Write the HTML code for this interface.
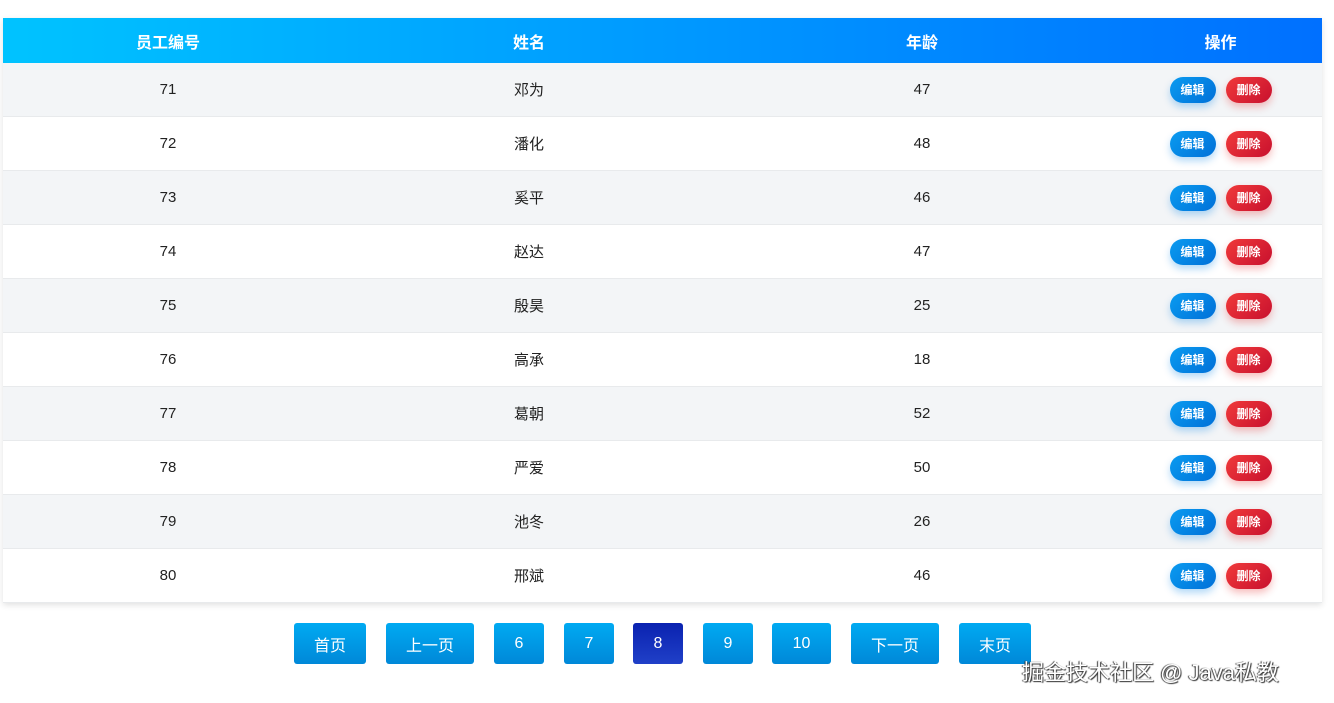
<!DOCTYPE html><html><head><meta charset="utf-8"><style>
body{margin:0;width:1334px;height:703px;background:#fff;font-family:"Liberation Sans","Noto Sans CJK SC",sans-serif;position:relative;overflow:hidden}
.tbl{position:absolute;left:3px;top:18px;width:1319px;box-shadow:0 2px 6px rgba(0,0,0,.12)}
.hd{height:45px;background:linear-gradient(90deg,#00c3ff,#0070ff);color:#fff;font-weight:bold;font-size:16px;display:flex}
.row{height:53px;border-bottom:1px solid #e8eaec;display:flex;font-size:15px;color:#222}
.row:nth-child(odd){background:#f3f5f7}
.c{display:flex;align-items:center;justify-content:center}
.c1{width:330px}.c2{width:392px}.c3{width:394px}.c4{width:203px}
.b{width:46px;height:26px;border-radius:13px;color:#fff;font-size:12px;font-weight:bold;display:flex;align-items:center;justify-content:center;margin:0 5px}
.e{background:linear-gradient(135deg,#0a9bf0,#0070d8);box-shadow:0 4px 8px rgba(0,130,230,.3)}
.d{background:linear-gradient(135deg,#f03a3a,#c8102e);box-shadow:0 4px 8px rgba(230,40,40,.3)}
.p{position:absolute;top:623px;height:41px;border-radius:3px;background:linear-gradient(#00aaf2,#0088d8);color:#fff;font-size:16px;display:flex;align-items:center;justify-content:center}
.wm{position:absolute;left:1022px;top:655px;font-size:22px;color:#fff;text-shadow:1px 1px 1px #333,-1px 0 1px #333}
</style></head><body>
<div class="tbl">
<div class="hd"><div class="c c1">员工编号</div><div class="c c2">姓名</div><div class="c c3">年龄</div><div class="c c4">操作</div></div>
<div>
<div class="row"><div class="c c1">71</div><div class="c c2">邓为</div><div class="c c3">47</div><div class="c c4"><span class="b e">编辑</span><span class="b d">删除</span></div></div>
<div class="row"><div class="c c1">72</div><div class="c c2">潘化</div><div class="c c3">48</div><div class="c c4"><span class="b e">编辑</span><span class="b d">删除</span></div></div>
<div class="row"><div class="c c1">73</div><div class="c c2">奚平</div><div class="c c3">46</div><div class="c c4"><span class="b e">编辑</span><span class="b d">删除</span></div></div>
<div class="row"><div class="c c1">74</div><div class="c c2">赵达</div><div class="c c3">47</div><div class="c c4"><span class="b e">编辑</span><span class="b d">删除</span></div></div>
<div class="row"><div class="c c1">75</div><div class="c c2">殷昊</div><div class="c c3">25</div><div class="c c4"><span class="b e">编辑</span><span class="b d">删除</span></div></div>
<div class="row"><div class="c c1">76</div><div class="c c2">高承</div><div class="c c3">18</div><div class="c c4"><span class="b e">编辑</span><span class="b d">删除</span></div></div>
<div class="row"><div class="c c1">77</div><div class="c c2">葛朝</div><div class="c c3">52</div><div class="c c4"><span class="b e">编辑</span><span class="b d">删除</span></div></div>
<div class="row"><div class="c c1">78</div><div class="c c2">严爱</div><div class="c c3">50</div><div class="c c4"><span class="b e">编辑</span><span class="b d">删除</span></div></div>
<div class="row"><div class="c c1">79</div><div class="c c2">池冬</div><div class="c c3">26</div><div class="c c4"><span class="b e">编辑</span><span class="b d">删除</span></div></div>
<div class="row"><div class="c c1">80</div><div class="c c2">邢斌</div><div class="c c3">46</div><div class="c c4"><span class="b e">编辑</span><span class="b d">删除</span></div></div>
</div></div>
<div class="p" style="left:294px;width:72px">首页</div>
<div class="p" style="left:386px;width:88px">上一页</div>
<div class="p" style="left:494px;width:50px">6</div>
<div class="p" style="left:564px;width:50px">7</div>
<div class="p" style="left:633px;width:50px;background:linear-gradient(#0a22b0,#2040c8)">8</div>
<div class="p" style="left:703px;width:50px">9</div>
<div class="p" style="left:772px;width:59px">10</div>
<div class="p" style="left:851px;width:88px">下一页</div>
<div class="p" style="left:959px;width:72px">末页</div>
<div class="wm">掘金技术社区 @ Java私教</div>
</body></html>
